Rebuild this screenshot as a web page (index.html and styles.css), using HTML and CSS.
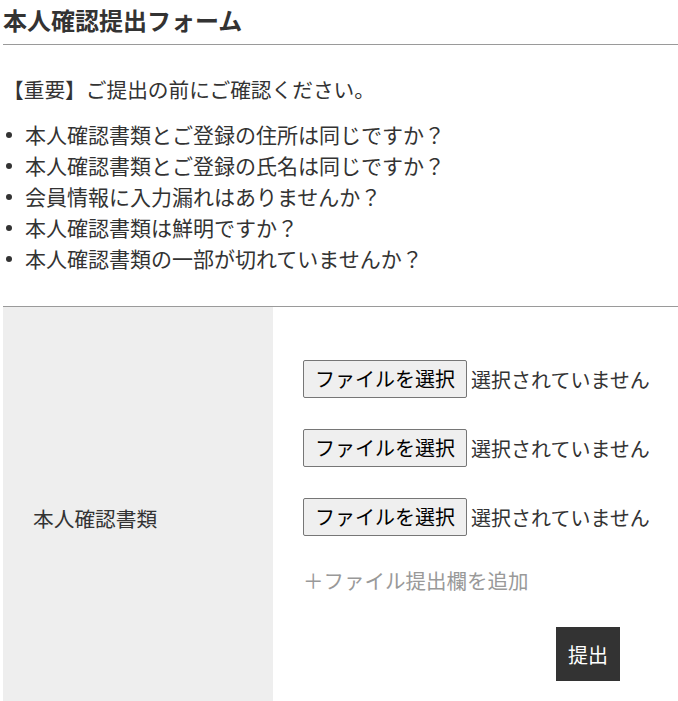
FILE: index.html
```html
<!DOCTYPE html>
<html lang="ja">
<head>
<meta charset="utf-8">
<title>本人確認提出フォーム</title>
<link rel="stylesheet" href="styles.css">
</head>
<body>
<div class="page">
  <h1 class="title">本人確認提出フォーム</h1>
  <p class="notice">【重要】ご提出の前にご確認ください。</p>
  <ul class="checklist">
    <li>本人確認書類とご登録の住所は同じですか？</li>
    <li>本人確認書類とご登録の氏名は同じですか？</li>
    <li>会員情報に入力漏れはありませんか？</li>
    <li>本人確認書類は鮮明ですか？</li>
    <li>本人確認書類の一部が切れていませんか？</li>
  </ul>
  <div class="form-table">
    <div class="form-label">本人確認書類</div>
    <div class="form-field">
      <div class="file-row"><button type="button" class="file-btn">ファイルを選択</button><span class="file-name">選択されていません</span></div>
      <div class="file-row"><button type="button" class="file-btn">ファイルを選択</button><span class="file-name">選択されていません</span></div>
      <div class="file-row"><button type="button" class="file-btn">ファイルを選択</button><span class="file-name">選択されていません</span></div>
      <a class="add-link">＋ファイル提出欄を追加</a>
      <div class="submit-row"><button type="button" class="submit-btn">提出</button></div>
    </div>
  </div>
</div>
</body>
</html>
```

FILE: styles.css
```css
html, body {
  margin: 0;
  padding: 0;
  background: #fff;
}
body {
  font-family: "Noto Sans CJK JP", "Noto Sans", sans-serif;
  color: #333;
  font-size: 20px;
}
.page {
  padding-left: 3px;
}
.title {
  margin: 0;
  font-size: 24px;
  font-weight: bold;
  line-height: 40px;
  padding-bottom: 4px;
  border-bottom: 1px solid #9a9a9a;
}
.notice {
  margin: 29px 0 0 0;
  line-height: 31px;
  font-size: 20.7px;
}
.checklist {
  list-style: none;
  margin: 14px 0 0 0;
  padding: 0;
}
.checklist li {
  position: relative;
  padding-left: 22px;
  line-height: 31px;
  font-size: 21px;
}
.checklist li::before {
  content: "";
  position: absolute;
  left: 3px;
  top: 13px;
  width: 6px;
  height: 6px;
  border-radius: 50%;
  background: #333;
}
.form-table {
  margin-top: 32px;
  border-top: 1px solid #9a9a9a;
  display: flex;
}
.form-label {
  width: 240px;
  flex: none;
  background: #eeeeee;
  padding: 0 0 0 30px;
  display: flex;
  align-items: center;
  font-size: 20.7px;
}
.form-field {
  flex: 1;
  padding: 53px 30px 48px 30px;
}
.file-row {
  display: flex;
  align-items: center;
  height: 38px;
  margin-bottom: 31px;
}
.file-btn {
  font-family: inherit;
  font-size: 20px;
  color: #000;
  height: 38px;
  width: 164px;
  padding: 0;
  background: #efefef;
  border: 1px solid #767676;
  border-radius: 2px;
  line-height: 36px;
}
.file-name {
  margin-left: 4px;
  white-space: nowrap;
}
.add-link {
  display: block;
  margin-top: -2px;
  color: #999;
  line-height: 31px;
  font-size: 20.5px;
  white-space: nowrap;
}
.submit-row {
  margin-top: 31px;
  padding-left: 253px;
}
.submit-btn {
  font-family: inherit;
  font-size: 20px;
  width: 64px;
  height: 54px;
  padding: 0;
  border: none;
  background: #333;
  color: #fff;
}
```
